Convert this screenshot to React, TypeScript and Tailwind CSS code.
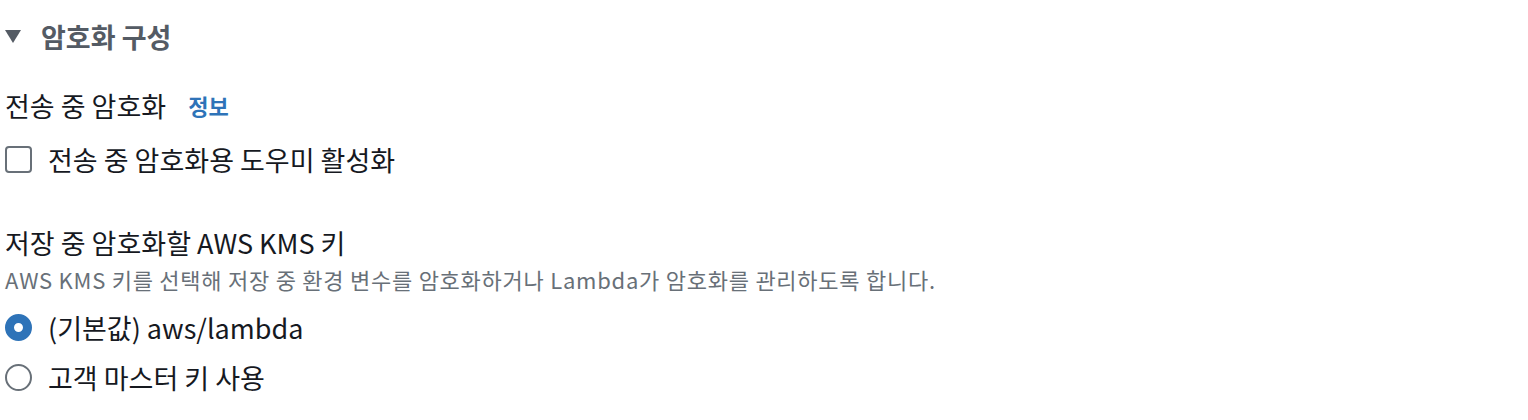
import { useState } from 'react';

const font = { fontFamily: '"Noto Sans CJK KR", "Noto Sans", sans-serif' };

export default function App() {
  const [transit, setTransit] = useState(false);
  const [key, setKey] = useState('default');

  return (
    <div className="w-[1528px] h-[420px] bg-white text-[#16191f]" style={font}>
      <div className="flex items-center gap-[20px] pl-[5px] pt-[22px] h-[51px]">
        <svg width="16" height="13" viewBox="0 0 16 13">
          <path d="M0 0h16L8 13z" fill="#545b64" />
        </svg>
        <span className="text-[27px] font-bold text-[#545b64] leading-none">암호화 구성</span>
      </div>

      <div className="pl-[5px] pt-[40px]">
        <div className="flex items-center gap-[22px] h-[28px]">
          <span className="text-[27px] leading-none">전송 중 암호화</span>
          <span className="text-[22px] font-bold text-[#2e73b8] leading-none">정보</span>
        </div>
        <label className="flex items-center gap-[16px] mt-[26px] h-[28px] cursor-pointer">
          <span
            onClick={() => setTransit(!transit)}
            className="w-[27px] h-[27px] rounded-[4px] border-2 border-[#687078] bg-white"
          />
          <span className="text-[27px] leading-none">전송 중 암호화용 도우미 활성화</span>
        </label>

        <div className="mt-[55px] h-[28px] flex items-center text-[27px] leading-none">저장 중 암호화할 AWS KMS 키</div>
        <div className="mt-[11px] h-[24px] flex items-center text-[22px] leading-none tracking-[0.75px] text-[#687078]">
          AWS KMS 키를 선택해 저장 중 환경 변수를 암호화하거나 Lambda가 암호화를 관리하도록 합니다.
        </div>

        <div className="mt-[22px] flex flex-col gap-[22px]">
          {[
            { id: 'default', label: '(기본값) aws/lambda' },
            { id: 'cmk', label: '고객 마스터 키 사용' },
          ].map((o) => (
            <label key={o.id} className="flex items-center gap-[16px] h-[28px] cursor-pointer" onClick={() => setKey(o.id)}>
              {key === o.id ? (
                <span className="w-[27px] h-[27px] rounded-full border-[9px] border-[#2e73b8] bg-white" />
              ) : (
                <span className="w-[27px] h-[27px] rounded-full border-2 border-[#687078] bg-white" />
              )}
              <span className="text-[27px] leading-none">{o.label}</span>
            </label>
          ))}
        </div>
      </div>
    </div>
  );
}
